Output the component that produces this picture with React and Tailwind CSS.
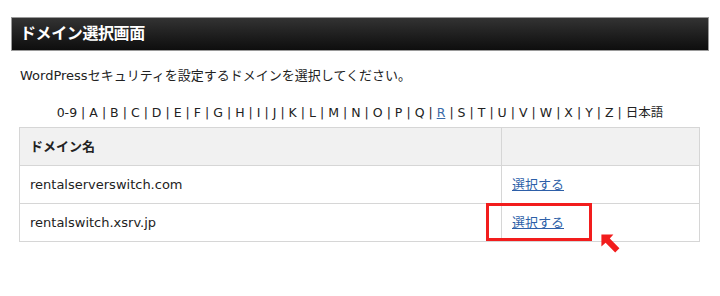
const letters = ['0-9', 'A', 'B', 'C', 'D', 'E', 'F', 'G', 'H', 'I', 'J', 'K', 'L', 'M', 'N', 'O', 'P', 'Q', 'R', 'S', 'T', 'U', 'V', 'W', 'X', 'Y', 'Z']

const domains = ['rentalserverswitch.com', 'rentalswitch.xsrv.jp']

export default function App() {
  return (
    <div
      className="relative w-[720px] h-[296px] bg-white text-[#222] overflow-hidden"
      style={{ fontFamily: '"DejaVu Sans", "Noto Sans CJK JP", sans-serif' }}
    >
      <div className="pt-[17px] px-[11px]">
        <div className="h-[34px] w-[698px] border border-[#9a9a9a] bg-gradient-to-b from-[#333] to-[#0e0e0e] flex items-center pl-[8px]">
          <h1 className="text-white font-bold text-[16px] tracking-[-0.4px]">ドメイン選択画面</h1>
        </div>
      </div>

      <p className="mt-[15px] ml-[20px] text-[13px]">
        WordPressセキュリティを設定するドメインを選択してください。
      </p>

      <div className="mt-[21px] flex justify-center text-[12.5px] leading-none">
        {letters.map((l) => (
          <span key={l} className="flex">
            {l === 'R' ? (
              <a className="text-[#3a6aa8] underline">{l}</a>
            ) : (
              <span>{l}</span>
            )}
            <span className="mx-[4px]">|</span>
          </span>
        ))}
        <span>日本語</span>
      </div>

      <div className="relative mt-[8px] ml-[19px] w-[681px]">
        <table className="w-full border-collapse text-[13px]">
          <thead>
            <tr className="bg-[#f1f1f1] h-[38px]">
              <th className="border border-[#d6d6d6] text-left font-bold pl-[10px] w-[482px]">ドメイン名</th>
              <th className="border border-[#d6d6d6]"></th>
            </tr>
          </thead>
          <tbody>
            {domains.map((d) => (
              <tr key={d} className="h-[38px]">
                <td className="border border-[#d6d6d6] pl-[10px]">{d}</td>
                <td className="border border-[#d6d6d6] pl-[10px]">
                  <a className="text-[#2d5fa8] underline">選択する</a>
                </td>
              </tr>
            ))}
          </tbody>
        </table>

        <div className="absolute left-[467px] top-[76px] w-[106px] h-[38px] border-[3px] border-[#f21d1d]"></div>
        <svg className="absolute left-[580px] top-[105px]" width="24" height="24" viewBox="0 0 20 20">
          <polygon points="2,2 12,2 9,5.5 17,13.5 13.5,17 5.5,9 2,12" fill="#f21d1d" />
        </svg>
      </div>
    </div>
  )
}
